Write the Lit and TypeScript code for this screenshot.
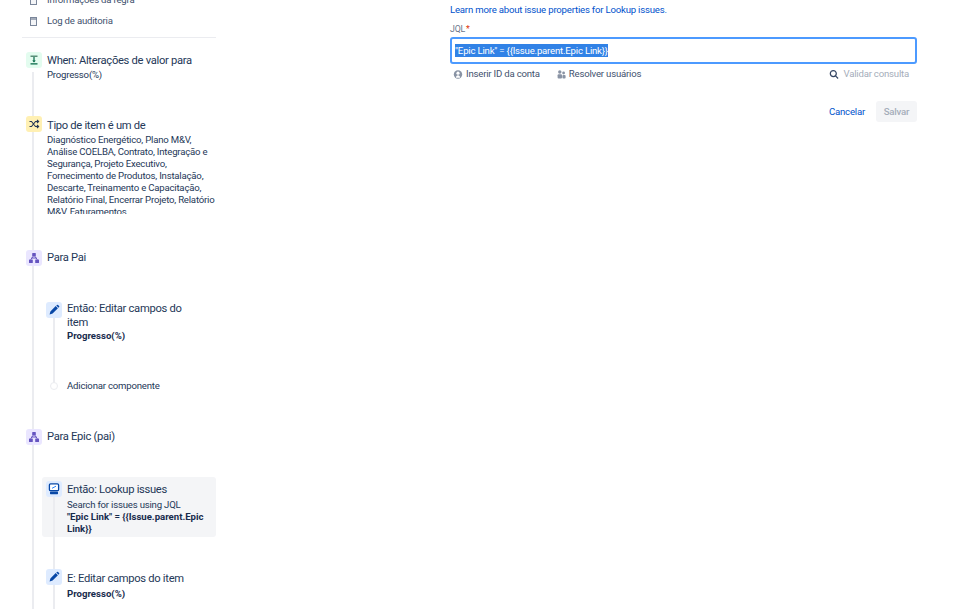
import { LitElement, html, css } from "lit";
import { customElement } from "lit/decorators.js";

const pencil = html`<svg width="16" height="16" viewBox="0 0 16 16"><path d="M3.6 12.4l.8-3 5.3-5.3 2.2 2.2-5.3 5.3zM10.3 3.5l.6-.6a.8.8 0 0 1 1.1 0l1.1 1.1a.8.8 0 0 1 0 1.1l-.6.6z" fill="#0747a6"/></svg>`;
const branch = html`<svg width="16" height="16" viewBox="0 0 16 16"><g fill="#6554c0"><rect x="6.2" y="3" width="3.6" height="3.6" rx=".6"/><rect x="3" y="9.4" width="3.8" height="3.6" rx=".6"/><rect x="9.2" y="9.4" width="3.8" height="3.6" rx=".6"/></g><path d="M7 6.5 4.8 9.5M9 6.5l2.2 3M5.5 8h5" stroke="#6554c0" fill="none"/></svg>`;
const trigger = html`<svg width="16" height="16" viewBox="0 0 16 16"><path d="M4.5 4.2h7" stroke="#36735a" stroke-width="1.2" fill="none"/><path d="M7.4 5h1.2v3.4h1.2L8 10.6 6.2 8.4h1.2zM4.5 11.2h7v1.2h-7z" fill="#006644"/></svg>`;
const shuffle = html`<svg width="16" height="16" viewBox="0 0 16 16"><path d="M3.5 5.5h2l4 5h2.5M3.5 10.5h2l4-5h2.5M11 4l1.6 1.5L11 7M11 9l1.6 1.5L11 12" stroke="#253858" stroke-width="1.1" fill="none"/></svg>`;
const lookup = html`<svg width="16" height="16" viewBox="0 0 16 16"><rect x="3.4" y="2.8" width="9.2" height="6.8" rx="1.2" fill="#fff" stroke="#0747a6" stroke-width="1.3"/><path d="M6 7.3 10 5.2" stroke="#2684ff"/><rect x="4" y="10.6" width="8" height="2.6" rx=".6" fill="#0747a6"/></svg>`;

@customElement("app-root")
export class AppRoot extends LitElement {
  static styles = css`
    :host {
      display: block;
      height: 609px;
      overflow: hidden;
      background: #fff;
      color: #172b4d;
      font-family: Roboto, "Noto Sans", sans-serif;
      font-size: 9.6px;
      line-height: 12px;
      letter-spacing: -0.2px;
    }
    .page { display: flex; align-items: flex-start; height: 609px; overflow: hidden; }
    .side { width: 194px; margin-left: 22px; flex: none; position: relative; }
    .nav { display: flex; flex-direction: column; gap: 9px; margin-top: -6px; padding: 0 0 11px 0; border-bottom: 1px solid #ebecf0; height: 32px; box-sizing: content-box; }
    .nav-row { display: flex; align-items: center; gap: 10px; height: 12px; padding-left: 8px; color: #42526e; }
    .nav-ico { width: 7px; height: 9px; flex: none; border: 1px solid #7a869a; box-sizing: border-box; background: linear-gradient(#a5adba 2px, #f4f5f7 2px); }
    .flow { position: relative; }
    .flow::before { content: ""; position: absolute; left: 10px; top: 20px; width: 2px; height: 600px; background: #ebecf0; }
    .step { display: flex; gap: 5px; position: relative; }
    .ico { width: 16px; height: 16px; border-radius: 3px; flex: none; display: flex; align-items: center; justify-content: center; position: relative; z-index: 2; }
    .green { background: #e3fcef; }
    .yellow { background: #fff0b3; }
    .purple { background: #eae6ff; }
    .blue { background: #deebff; }
    .title { font-size: 11.2px; line-height: 14px; color: #253858; letter-spacing: -0.3px; }
    .sub { color: #253858; }
    .b { font-weight: 700; color: #172b4d; letter-spacing: 0; }
    .body { padding-top: 1px; min-width: 0; }
    .s1 { margin-top: 14px; padding-left: 4px; }
    .s1 .body { padding-top: 2px; }
    .s1 .sub { margin-top: 1px; }
    .s2 { margin-top: 35px; padding-left: 4px; }
    .s2 .body { padding-top: 3px; }
    .s2 .clip { margin-top: 1px; }
    .clip { height: 80px; overflow: hidden; }
    .s3 { margin-top: 36px; padding-left: 4px; }
    .nest { position: relative; padding-left: 20px; }
    .nest::before { content: ""; position: absolute; left: 31px; top: 7px; bottom: 6px; width: 2px; background: #ebecf0; z-index: 1; }
    .inner { display: flex; gap: 5px; position: relative; padding: 4px 4px; width: 174px; box-sizing: border-box; border-radius: 3px; }
    .n1 { margin-top: 32px; }
    .n1 .body { padding-right: 22px; padding-top: 0; }
    .add { display: flex; gap: 9px; align-items: center; margin-top: 34px; padding-left: 8px; position: relative; color: #253858; }
    .dot { width: 8px; height: 8px; border-radius: 50%; background: #fff; border: 1px solid #ebecf0; box-sizing: border-box; flex: none; position: relative; z-index: 2; }
    .active { background: #f4f5f7; margin-top: 32px; height: 60px; }
    .active .body { padding-top: 2px; }
    .active .title { margin-bottom: 2px; }
    .n2 { margin-top: 28px; }
    .n2 .body { padding-top: 3px; }
    .n2 .b { margin-top: 2px; }
    .s4 { margin-top: 37px; padding-left: 4px; }
    .nest2 { height: 200px; }

    .main { width: 467px; margin-left: 234px; flex: none; }
    .learn { color: #0052cc; margin-top: 4px; }
    .label { font-size: 8.8px; color: #6b778c; margin-top: 7px; line-height: 12px; }
    .label span { color: #de350b; margin-left: 1px; }
    .input { height: 27px; border: 2px solid #4c9aff; border-radius: 3px; box-sizing: border-box; margin-top: 2px; padding: 0 3px; display: flex; align-items: center; }
    .sel { background: #3182e6; color: #fff; line-height: 13px; }
    .tools { display: flex; align-items: center; margin-top: 4px; height: 12px; padding: 0 8px 0 3px; color: #42526e; }
    .tool { display: flex; align-items: center; gap: 3px; }
    .second { margin-left: 17px; gap: 3px; }
    .muted { color: #a5adba; margin-left: auto; gap: 4px; }
    .btns { display: flex; justify-content: flex-end; align-items: center; gap: 11px; margin-top: 21px; }
    .cancel { color: #0052cc; }
    .save { height: 21px; width: 41px; border-radius: 3px; background: #f4f5f7; color: #a5adba; display: flex; align-items: center; justify-content: center; font-weight: 500; }
  `;

  render() {
    return html`<div class="page">
      <div class="side">
        <div class="nav">
          <div class="nav-row"><span class="nav-ico"></span><span>Informações da regra</span></div>
          <div class="nav-row"><span class="nav-ico"></span><span>Log de auditoria</span></div>
        </div>
        <div class="flow">
          <div class="step s1"><span class="ico green">${trigger}</span><div class="body"><div class="title">When: Alterações de valor para</div><div class="sub">Progresso(%)</div></div></div>
          <div class="step s2"><span class="ico yellow">${shuffle}</span><div class="body"><div class="title">Tipo de item é um de</div><div class="sub clip">Diagnóstico Energético, Plano M&V, Análise COELBA, Contrato, Integração e Segurança, Projeto Executivo, Fornecimento de Produtos, Instalação, Descarte, Treinamento e Capacitação, Relatório Final, Encerrar Projeto, Relatório M&V, Faturamentos</div></div></div>
          <div class="step s3"><span class="ico purple">${branch}</span><div class="body"><div class="title">Para Pai</div></div></div>
          <div class="nest">
            <div class="inner n1"><span class="ico blue">${pencil}</span><div class="body"><div class="title">Então: Editar campos do item</div><div class="sub b">Progresso(%)</div></div></div>
            <div class="add"><span class="dot"></span><span>Adicionar componente</span></div>
          </div>
          <div class="step s4"><span class="ico purple">${branch}</span><div class="body"><div class="title">Para Epic (pai)</div></div></div>
          <div class="nest nest2">
            <div class="inner active"><span class="ico blue">${lookup}</span><div class="body"><div class="title">Então: Lookup issues</div><div class="sub">Search for issues using JQL</div><div class="sub b">"Epic Link" = {{Issue.parent.Epic Link}}</div></div></div>
            <div class="inner n2"><span class="ico blue">${pencil}</span><div class="body"><div class="title">E: Editar campos do item</div><div class="sub b">Progresso(%)</div></div></div>
          </div>
        </div>
      </div>
      <div class="main">
        <div class="learn">Learn more about issue properties for Lookup issues.</div>
        <div class="label">JQL<span>*</span></div>
        <div class="input"><span class="sel">"Epic Link" = {{Issue.parent.Epic Link}}</span></div>
        <div class="tools">
          <span class="tool"><svg width="10" height="11" viewBox="0 0 10 11" fill="none"><circle cx="5" cy="5.5" r="4.2" fill="#8993a4"/><circle cx="5" cy="4.2" r="1.6" fill="#fff"/><path d="M2.8 8.8c.2-1.8 1-2.6 2.2-2.6s2 .8 2.2 2.6z" fill="#fff"/></svg>Inserir ID da conta</span>
          <span class="tool second"><svg width="9" height="11" viewBox="0 0 9 11" fill="#8993a4"><circle cx="2.8" cy="3" r="1.7"/><circle cx="6.6" cy="4" r="1.4"/><rect x=".6" y="5.2" width="4.4" height="4.4" rx="1"/><rect x="5.4" y="6" width="3.2" height="3.6" rx="1"/></svg>Resolver usuários</span>
          <span class="tool muted"><svg width="10" height="11" viewBox="0 0 10 11" fill="none" stroke="#344563" stroke-width="1.2"><circle cx="4.3" cy="4.6" r="3"/><path d="M6.5 6.9l2.6 2.6"/></svg>Validar consulta</span>
        </div>
        <div class="btns"><span class="cancel">Cancelar</span><span class="save">Salvar</span></div>
      </div>
    </div>`;
  }
}
